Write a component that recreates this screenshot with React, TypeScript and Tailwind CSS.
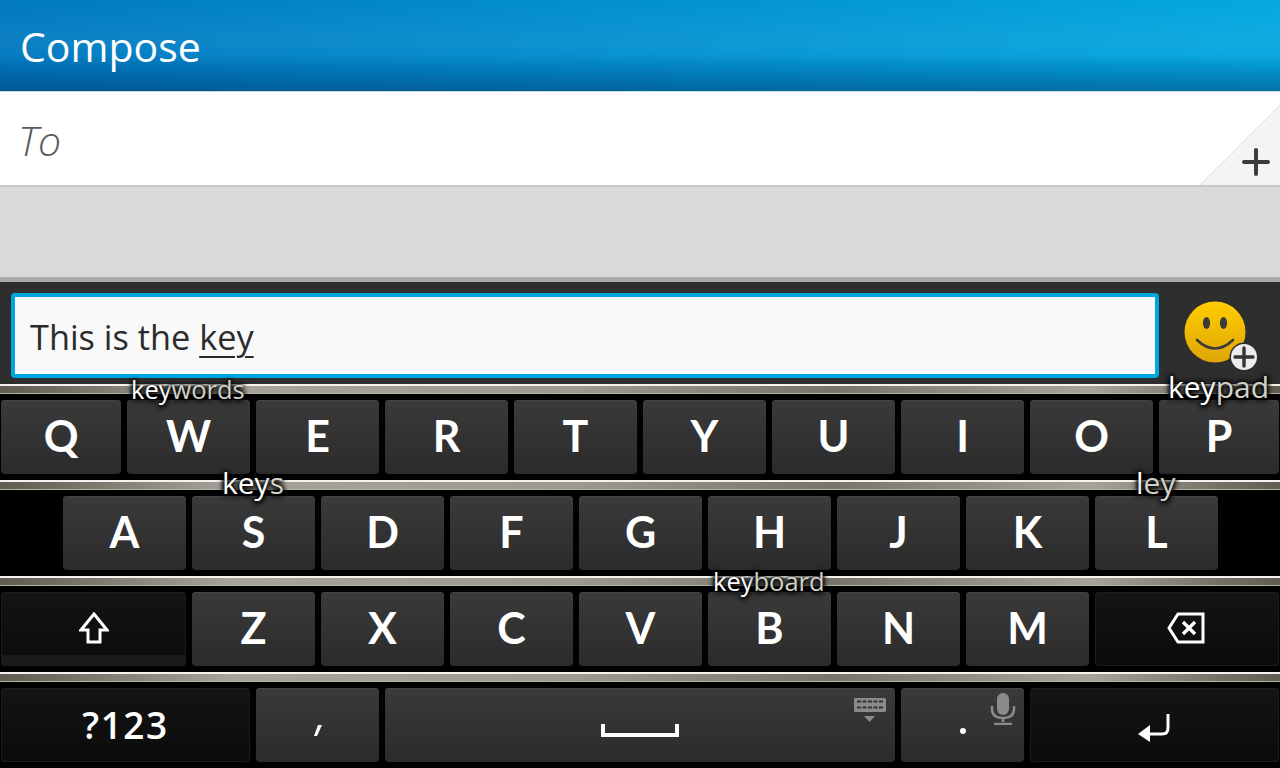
import React from "react";

const font = "font-['Open_Sans','Noto_Sans',sans-serif]";
const lightKey =
  "bg-[linear-gradient(#3a3a3a,#2b2b2b)] shadow-[inset_0_1px_0_#444]";
const darkKey =
  "bg-[linear-gradient(#141414,#0b0b0b)] shadow-[inset_0_0_0_1px_#1b1b1b]";
const letterText = "text-[43px] font-bold font-['Lato','Open_Sans',sans-serif] pb-[3px]";

function Key({
  w = "w-[123px]",
  dark,
  className = "",
  children,
}: {
  w?: string;
  dark?: boolean;
  className?: string;
  children?: React.ReactNode;
}) {
  return (
    <div
      className={`${w} h-[74px] shrink-0 rounded-[4px] flex items-center justify-center relative text-white leading-none overflow-hidden ${
        dark ? darkKey : lightKey
      } ${className}`}
    >
      {children}
    </div>
  );
}

function Letter({ children }: { children: string }) {
  return <Key className={letterText}>{children}</Key>;
}

function Row({
  className = "",
  children,
}: {
  className?: string;
  children: React.ReactNode;
}) {
  return (
    <div className="h-[96px]">
      {/* metal divider */}
      <div className="h-[2px] bg-[#f2f2ee]" />
      <div className="h-[8px] bg-[linear-gradient(transparent_85%,#b5b3a9_85%),linear-gradient(90deg,#5e5c4e_0%,#a6a49a_18%,#9c9a90_45%,#77756b_65%,#a6a49a_85%,#5e5c4e_100%)]" />
      <div className={`flex gap-[6px] pt-[6px] ${className}`}>{children}</div>
    </div>
  );
}

function Hint({
  strong,
  rest,
  className,
}: {
  strong: string;
  rest: string;
  className: string;
}) {
  return (
    <div
      className={`absolute leading-none text-white whitespace-nowrap [text-shadow:0_0_4px_#000,0_0_4px_#000,0_1px_6px_#000,0_2px_6px_#000] ${className}`}
    >
      {strong}
      <span className="text-[#d2d1c8]">{rest}</span>
    </div>
  );
}

export default function App() {
  return (
    <div className={`w-[1280px] h-[768px] overflow-hidden relative bg-black ${font}`}>
      {/* Header */}
      <div className="h-[92px] flex items-center pl-[20px] pt-[3px] text-white text-[41px] font-normal bg-[linear-gradient(rgba(0,0,0,0)_60%,rgba(0,40,90,0.42)_100%),linear-gradient(rgba(255,255,255,0)_0%,rgba(255,255,255,0.05)_45%,rgba(255,255,255,0)_75%),linear-gradient(90deg,#0079c0,#04a8e0)] border-b border-[#d0d8dc]">
        Compose
      </div>

      {/* To */}
      <div className="h-[93px] bg-white flex items-center pl-[18px] pt-[5px] relative text-[41px] font-light italic text-[#5c5c5c]">
        To
        <svg
          className="absolute right-0 bottom-0"
          width="80"
          height="80"
          viewBox="0 0 80 80"
        >
          <polygon points="80,0 80,80 0,80" fill="#f4f4f4" />
          <line x1="80" y1="0" x2="0" y2="80" stroke="#d2d2d2" strokeWidth="1" strokeDasharray="2 1" />
          <path d="M56 44v24M44 56h24" stroke="#3c3c3c" strokeWidth="4" strokeLinecap="round" transform="translate(0 1)" />
        </svg>
      </div>

      {/* Empty area */}
      <div className="h-[97px] bg-[#d9d9d9] border-t-2 border-b-[5px] border-t-[#c8c8c8] border-b-[#a9a9a9]" />

      {/* Text bar */}
      <div className="h-[102px] bg-[#2e2e2e] flex items-start pt-[11px] pl-[11px]">
        <div className="w-[1148px] h-[85px] border-[4px] border-[#00a7de] rounded-[4px] bg-[#f9f9f9] flex items-center pl-[15px] pt-[3px] text-[34.3px] text-[#2b2b2b]">
          This is the&nbsp;<span className="underline underline-offset-[6px] decoration-2">key</span>
        </div>
        <svg className="ml-[25px] mt-[8px]" width="76" height="70" viewBox="0 0 76 70">
          <defs>
            <linearGradient id="smile" x1="0" y1="0" x2="0" y2="1">
              <stop offset="0" stopColor="#ffcd00" />
              <stop offset="1" stopColor="#dfa506" />
            </linearGradient>
          </defs>
          <circle cx="31" cy="31" r="30.5" fill="url(#smile)" />
          <ellipse cx="22.5" cy="22" rx="3.6" ry="6" fill="#3a3a3a" />
          <ellipse cx="39.5" cy="22" rx="3.6" ry="6" fill="#3a3a3a" />
          <path d="M13 39Q31 56 49 39" fill="none" stroke="#3a3a3a" strokeWidth="2.6" strokeLinecap="round" />
          <circle cx="60" cy="56" r="14.5" fill="#2e2e2e" />
          <circle cx="60" cy="56" r="13" fill="#ececec" />
          <path d="M60 47v18M51 56h18" stroke="#333" strokeWidth="3.4" strokeLinecap="round" />
        </svg>
      </div>

      {/* Keyboard */}
      <div className="h-[384px] bg-black">
        <Row className="pl-[1px]">
          <Key w="w-[120px]" className={letterText}>Q</Key>
          <Letter>W</Letter>
          <Letter>E</Letter>
          <Letter>R</Letter>
          <Letter>T</Letter>
          <Letter>Y</Letter>
          <Letter>U</Letter>
          <Letter>I</Letter>
          <Letter>O</Letter>
          <Key w="w-[120px]" className={letterText}>P</Key>
        </Row>
        <Row className="pl-[63px]">
          <Letter>A</Letter>
          <Letter>S</Letter>
          <Letter>D</Letter>
          <Letter>F</Letter>
          <Letter>G</Letter>
          <Letter>H</Letter>
          <Letter>J</Letter>
          <Letter>K</Letter>
          <Letter>L</Letter>
        </Row>
        <Row className="pl-[1px]">
          <Key w="w-[185px]" dark>
            <svg className="mb-[2px]" width="30" height="32" viewBox="0 0 30 32">
              <path d="M15 2 28 18H21V30H9V18H2Z" fill="none" stroke="#fff" strokeWidth="3" />
            </svg>
            <div className="absolute left-0 right-0 bottom-0 h-[11px] bg-[#1a1a1a]" />
          </Key>
          <Letter>Z</Letter>
          <Letter>X</Letter>
          <Letter>C</Letter>
          <Letter>V</Letter>
          <Letter>B</Letter>
          <Letter>N</Letter>
          <Letter>M</Letter>
          <Key w="w-[184px]" dark>
            <svg className="mb-[2px] mr-[2px]" width="38" height="32" viewBox="0 0 38 32">
              <path d="M11 2H36V30H11L2 16Z" fill="none" stroke="#fff" strokeWidth="3" />
              <path d="M16 10 28 22M28 10 16 22" stroke="#fff" strokeWidth="3.4" />
            </svg>
          </Key>
        </Row>
        <Row className="pl-[1px]">
          <Key w="w-[249px]" dark className="text-[37px] font-semibold tracking-[1.5px] pb-[2px]">
            ?123
          </Key>
          <Key>
            <svg className="mt-[14px]" width="10" height="16" viewBox="0 0 10 16">
              <path d="M5 1H9L4 12H1Z" fill="#fff" />
            </svg>
          </Key>
          <Key w="w-[510px]">
            <svg className="mt-[12px]" width="78" height="14" viewBox="0 0 78 14">
              <path d="M2 0V11H76V0" fill="none" stroke="#fff" strokeWidth="4" />
            </svg>
            <svg className="absolute right-[8px] top-[9px]" width="34" height="26" viewBox="0 0 34 26">
              <rect x="1" y="1" width="32" height="14" rx="1.5" fill="#8a8a8a" />
              <path d="M4 4.5h26M4 10.5h26" stroke="#333" strokeWidth="2" strokeDasharray="4 1.5" />
              <path d="M11 19H22L16.5 25Z" fill="#8a8a8a" />
            </svg>
          </Key>
          <Key>
            <div className="w-[6px] h-[6px] rounded-full bg-white mt-[12px]" />
            <svg className="absolute right-[8px] top-[5px]" width="26" height="32" viewBox="0 0 26 32">
              <rect x="7" y="0" width="12" height="22" rx="6" fill="#8a8a8a" />
              <path d="M2 13V16Q2 25 13 25Q24 25 24 16V13" fill="none" stroke="#8a8a8a" strokeWidth="2.5" />
              <path d="M13 25V29M4 31H22" stroke="#8a8a8a" strokeWidth="2.6" />
            </svg>
          </Key>
          <Key w="w-[249px]" dark>
            <svg className="mt-[6px] mr-[2px]" width="34" height="30" viewBox="0 0 34 30">
              <path d="M31 1V15Q31 21 25 21H12" fill="none" stroke="#fff" strokeWidth="3" />
              <path d="M13 12V29L1 21Z" fill="#fff" />
            </svg>
          </Key>
        </Row>
      </div>

      {/* Prediction words over the key dividers */}
      <Hint strong="key" rest="words" className="left-[131px] top-[377px] text-[25.5px]" />
      <Hint strong="key" rest="pad" className="left-[1168px] top-[372px] text-[30px]" />
      <Hint strong="key" rest="s" className="left-[222px] top-[468px] text-[30px]" />
      <Hint strong="l" rest="ey" className="left-[1136px] top-[468px] text-[30px]" />
      <Hint strong="key" rest="board" className="left-[713px] top-[569px] text-[25.5px]" />
    </div>
  );
}
